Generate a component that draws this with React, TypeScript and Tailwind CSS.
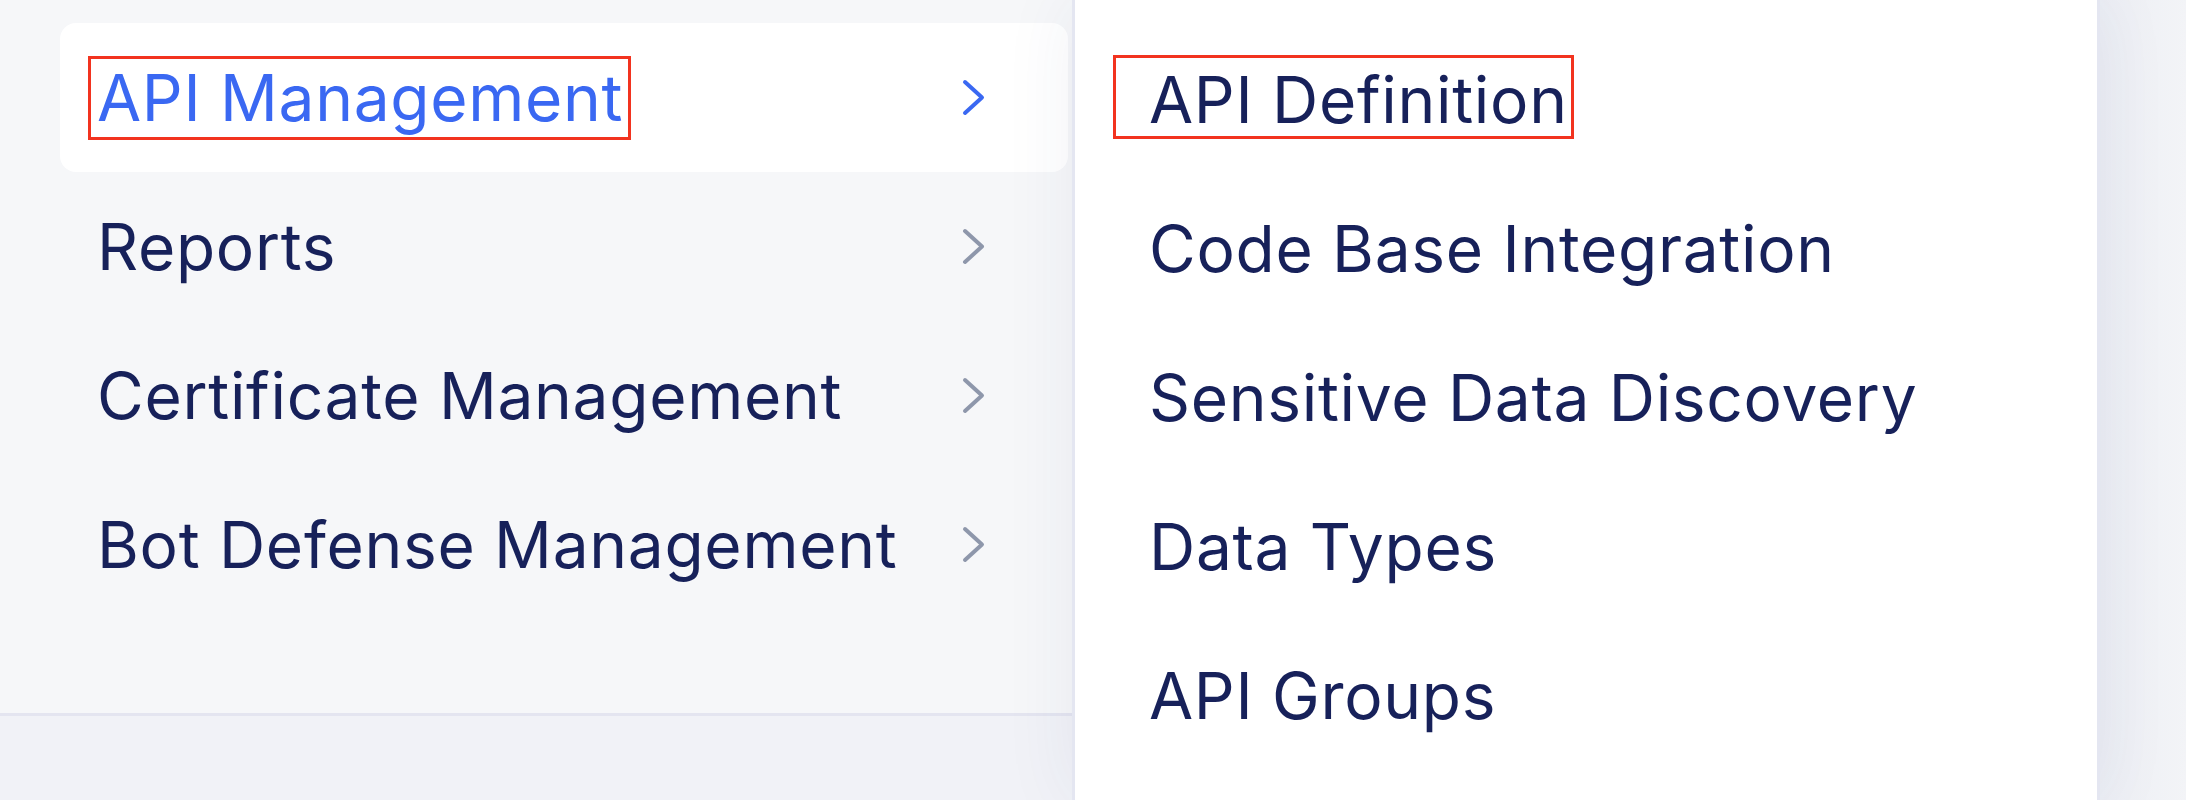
import React from "react";

function Chevron({ active }: { active?: boolean }) {
  return (
    <svg width="24" height="37" viewBox="0 0 24 37" fill="none" className="shrink-0">
      <path
        d="M3 3 L20 18.5 L3 34"
        stroke={active ? "#3a68f2" : "#8e97ab"}
        strokeWidth="4"
        strokeLinecap="round"
        strokeLinejoin="round"
      />
    </svg>
  );
}

export default function App() {
  const left = [
    { label: "API Management", active: true },
    { label: "Reports", active: false },
    { label: "Certificate Management", active: false },
    { label: "Bot Defense Management", active: false },
  ];
  const right = [
    "API Definition",
    "Code Base Integration",
    "Sensitive Data Discovery",
    "Data Types",
    "API Groups",
  ];
  return (
    <div className="flex h-[800px] w-[2186px] overflow-hidden bg-[#f1f2f6] font-[Inter,sans-serif]">
      {/* Left column */}
      <div className="flex w-[1072px] shrink-0 flex-col">
        <div className="h-[716px] border-b-[3px] border-[#e4e5f0] bg-[#f6f7f9] pt-[23px] pl-[60px] pr-[4px]">
          {left.map((it) => (
            <div
              key={it.label}
              className={
                "relative flex h-[149px] items-center justify-between rounded-[16px] pl-[37px] pr-[82px] " +
                (it.active ? "bg-white" : "")
              }
            >
              <span
                className={
                  "text-[64px] leading-[149px] tracking-[0.7px] " +
                  (it.active ? "text-[#3a68f2]" : "text-[#17215a]")
                }
              >
                {it.label}
              </span>
              <Chevron active={it.active} />
              {it.active && (
                <div className="pointer-events-none absolute left-[28px] top-[33px] h-[84px] w-[543px] border-[3px] border-[#f2331f]" />
              )}
            </div>
          ))}
        </div>
        <div className="flex-1 bg-[#f1f2f7]" />
      </div>

      {/* Right column */}
      <div className="relative z-10 w-[1028px] shrink-0 border-x-[3px] border-[#e4e6f1] bg-white pt-[25px] pl-[74px] shadow-[0_0_70px_rgba(40,50,110,0.07)]">
        {right.map((label, i) => (
          <div key={label} className="relative flex h-[149px] items-center">
            <span className="text-[64px] leading-[149px] tracking-[0.7px] text-[#17215a]">{label}</span>
            {i === 0 && (
              <div className="pointer-events-none absolute left-[-36px] top-[30px] h-[84px] w-[461px] border-[3px] border-[#f2331f]" />
            )}
          </div>
        ))}
      </div>

      {/* Right strip */}
      <div className="flex-1 bg-gradient-to-r from-[#eceef4] to-[#f3f4f7]" />
    </div>
  );
}
